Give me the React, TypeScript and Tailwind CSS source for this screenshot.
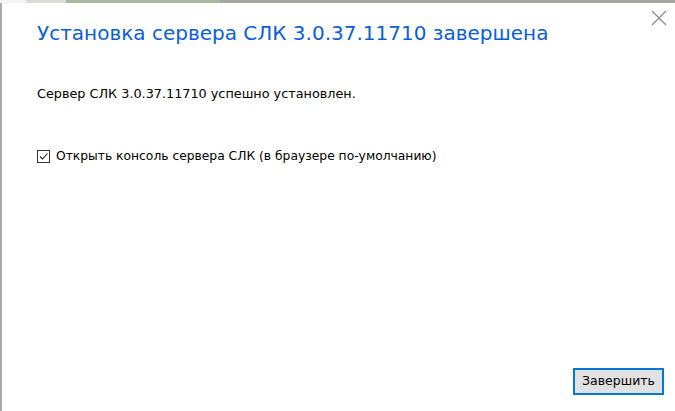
import React from "react";

export default function App() {
  return (
    <div className="w-[675px] h-[411px] bg-white flex flex-col overflow-hidden" style={{ fontFamily: '"DejaVu Sans", Verdana, sans-serif' }}>
      <div className="h-[3px] flex shrink-0">
        <div className="w-[26px] bg-[#f4f4f4]" />
        <div className="w-[40px] bg-[#d8dcd6]" />
        <div className="w-[154px] bg-[#a9b89f]" />
        <div className="flex-1 bg-[#a5a8a0]" />
      </div>
      <div className="flex-1 flex border-l-2 border-[#a8a8a8] relative">
        <div className="flex-1 flex flex-col pl-[35px] pr-[11px] pb-[16px]">
          <div className="pt-[17px] text-[20px] leading-[26px] text-[#0b5ed7]">
            Установка сервера СЛК 3.0.37.11710 завершена
          </div>
          <div className="mt-[40px] text-[12.8px] leading-[16px] text-black">
            Сервер СЛК 3.0.37.11710 успешно установлен.
          </div>
          <div className="mt-[46px] flex items-center gap-[6px] text-[12.3px] leading-[16px] text-black">
            <div className="w-[13px] h-[13px] border border-[#333] flex items-center justify-center bg-white">
              <svg width="11" height="11" viewBox="0 0 11 11">
                <path d="M2 5.5 L4.5 8 L9.5 2.5" stroke="#222" strokeWidth="1.1" fill="none" />
              </svg>
            </div>
            <span>Открыть консоль сервера СЛК (в браузере по-умолчанию)</span>
          </div>
          <div className="mt-auto flex justify-end">
            <button className="w-[91px] h-[27px] bg-[#e1e1e1] border-2 border-[#0078d7] text-[12.5px] text-black">
              Завершить
            </button>
          </div>
        </div>
        <div className="absolute right-[8px] top-[7px]">
          <svg width="16" height="16" viewBox="0 0 16 16">
            <path d="M1 1 L15 15 M15 1 L1 15" stroke="#8a8a8a" strokeWidth="1.2" />
          </svg>
        </div>
      </div>
    </div>
  );
}
